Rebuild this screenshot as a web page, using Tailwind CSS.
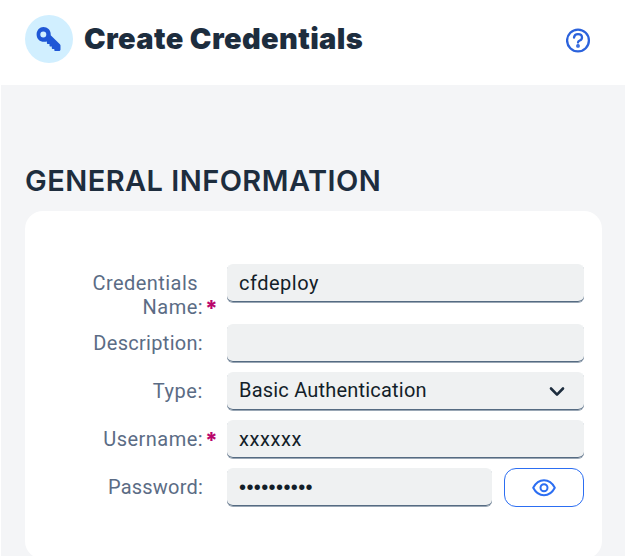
<!DOCTYPE html>
<html lang="en">
<head>
<meta charset="utf-8">
<title>Create Credentials</title>
<script src="https://cdn.jsdelivr.net/npm/@tailwindcss/browser@4"></script>
</head>
<body class="w-[625px] h-[556px] overflow-hidden bg-white pl-px font-['Roboto',sans-serif] text-[20px] leading-6 text-[#131e29]">
<div class="flex h-[556px] flex-col bg-[#f4f5f7]">
  <header class="flex h-[85px] shrink-0 items-start bg-white pl-6 pr-[34px] pt-[15px]">
    <div class="size-12 shrink-0 rounded-full bg-[#d1efff]">
      <svg class="size-12" viewBox="0.5 0.2 48 48" fill="#1f57d6"><path fill-rule="evenodd" d="M18.800 12.200c4.200 0 7.400 3.200 7.400 7v1.300l9.200 8.900c.4.400.6.900.6 1.400v3.900c0 .9-.6 1.500-1.500 1.500h-3.700c-.6 0-1-.4-1-1v-1h-1.500c-.6 0-1-.4-1-1v-1.500h-1.300c-.6 0-1-.4-1-1v-1.400h-1.600c-.5 0-1-.4-1-1v-1.700c-.9.300-1.800.4-2.900.4-4.300 0-7.400-3.200-7.400-7.400s3.200-7.400 6.700-7.400zm0 4.400a3 3 0 1 0 0 6 3 3 0 0 0 0-6z"/></svg>
    </div>
    <h1 class="ml-[11px] mt-[6px] whitespace-nowrap font-['Inter',sans-serif] text-[29px] font-black leading-9 tracking-[0.38px] text-[#1d2d3e]">Create Credentials</h1>
    <svg class="ml-auto mt-[13px] size-[25px] shrink-0" viewBox="0 0 25 25" fill="none" stroke="#2b62dc" stroke-width="2.300" stroke-linecap="round"><circle cx="12" cy="12.500" r="10.900"/><path d="M8 9.500c.3-2.100 1.900-3.300 4-3.300 2.400 0 4 1.400 4 3.300 0 1.600-1 2.500-2.300 3-1.100.5-1.700 1-1.700 2"/><circle cx="12" cy="17.900" r=".75"/></svg>
  </header>
  <main class="px-6 pt-[77px]">
    <h2 class="whitespace-nowrap font-['Inter',sans-serif] text-[29px] font-semibold leading-[38px] tracking-[0.45px] text-[#1d2d3e]">GENERAL INFORMATION</h2>
    <form class="mt-[11px] grid h-[348px] w-[577px] grid-cols-[178px_12px_357px] content-start gap-x-[6px] rounded-[18px] bg-white pt-[53px]">
      <div class="h-[60px] pt-[7px] text-right tracking-[0.45px] text-[#5b6c85]"><span class="pr-[5px]">Credentials</span><br>Name:</div>
      <div class="-ml-[4px] pt-[32px] font-['Inter',sans-serif] text-[22px] font-extrabold text-[#ba066c]">*</div>
      <div class="h-[39px] rounded-[6px] border-b border-[#9aa7b5] bg-[#eff1f2] px-3 pt-[7px] tracking-[0.5px] shadow-[inset_0_-1px_0_#556b82]">cfdeploy</div>

      <div class="h-12 pt-[7px] text-right tracking-[0.3px] text-[#5b6c85]">Description:</div>
      <div></div>
      <div class="h-[39px] rounded-[6px] border-b border-[#9aa7b5] bg-[#eff1f2] shadow-[inset_0_-1px_0_#556b82]"></div>

      <div class="h-12 pt-[7px] text-right tracking-[0.6px] text-[#5b6c85]">Type:</div>
      <div></div>
      <div class="flex h-[39px] items-start justify-between rounded-[6px] border-b border-[#9aa7b5] bg-[#eff1f2] pl-3 pr-[18px] pt-[6px] tracking-[0.2px] shadow-[inset_0_-1px_0_#556b82]">Basic Authentication<svg class="mt-[8px] h-[12px] w-[18px]" viewBox="0 0 18 12" fill="none" stroke="#1d2d3e" stroke-width="2.600" stroke-linecap="round" stroke-linejoin="round"><path d="M3 2.500 9 8.600l6-6.100"/></svg></div>

      <div class="h-12 pt-[7px] text-right tracking-[0.45px] text-[#5b6c85]">Username:</div>
      <div class="-ml-[4px] pt-[8px] font-['Inter',sans-serif] text-[22px] font-extrabold text-[#ba066c]">*</div>
      <div class="h-[39px] rounded-[6px] border-b border-[#9aa7b5] bg-[#eff1f2] px-3 pt-[7px] tracking-[0.6px] shadow-[inset_0_-1px_0_#556b82]">xxxxxx</div>

      <div class="h-12 pt-[7px] text-right tracking-[0.2px] text-[#5b6c85]">Password:</div>
      <div></div>
      <div class="flex gap-3">
        <div class="h-[39px] w-[265px] rounded-[6px] border-b border-[#9aa7b5] bg-[#eff1f2] px-3 pt-[7px] font-['Liberation_Sans',sans-serif] tracking-[0.4px] shadow-[inset_0_-1px_0_#556b82]">••••••••••</div>
        <div class="flex h-[39px] w-20 items-center justify-center rounded-xl border border-[#2c6ef2] bg-white">
          <svg class="h-[18px] w-6" viewBox="0 0.3 24 18" fill="none" stroke="#2c6ef2" stroke-width="2"><path stroke-linejoin="round" d="M1.200 9C3.700 4.200 7.500 1.500 12 1.500S20.300 4.200 22.800 9C20.300 13.800 16.500 16.500 12 16.500S3.700 13.800 1.200 9z"/><circle cx="12" cy="9" r="3.500"/></svg>
        </div>
      </div>
    </form>
  </main>
</div>
</body>
</html>
